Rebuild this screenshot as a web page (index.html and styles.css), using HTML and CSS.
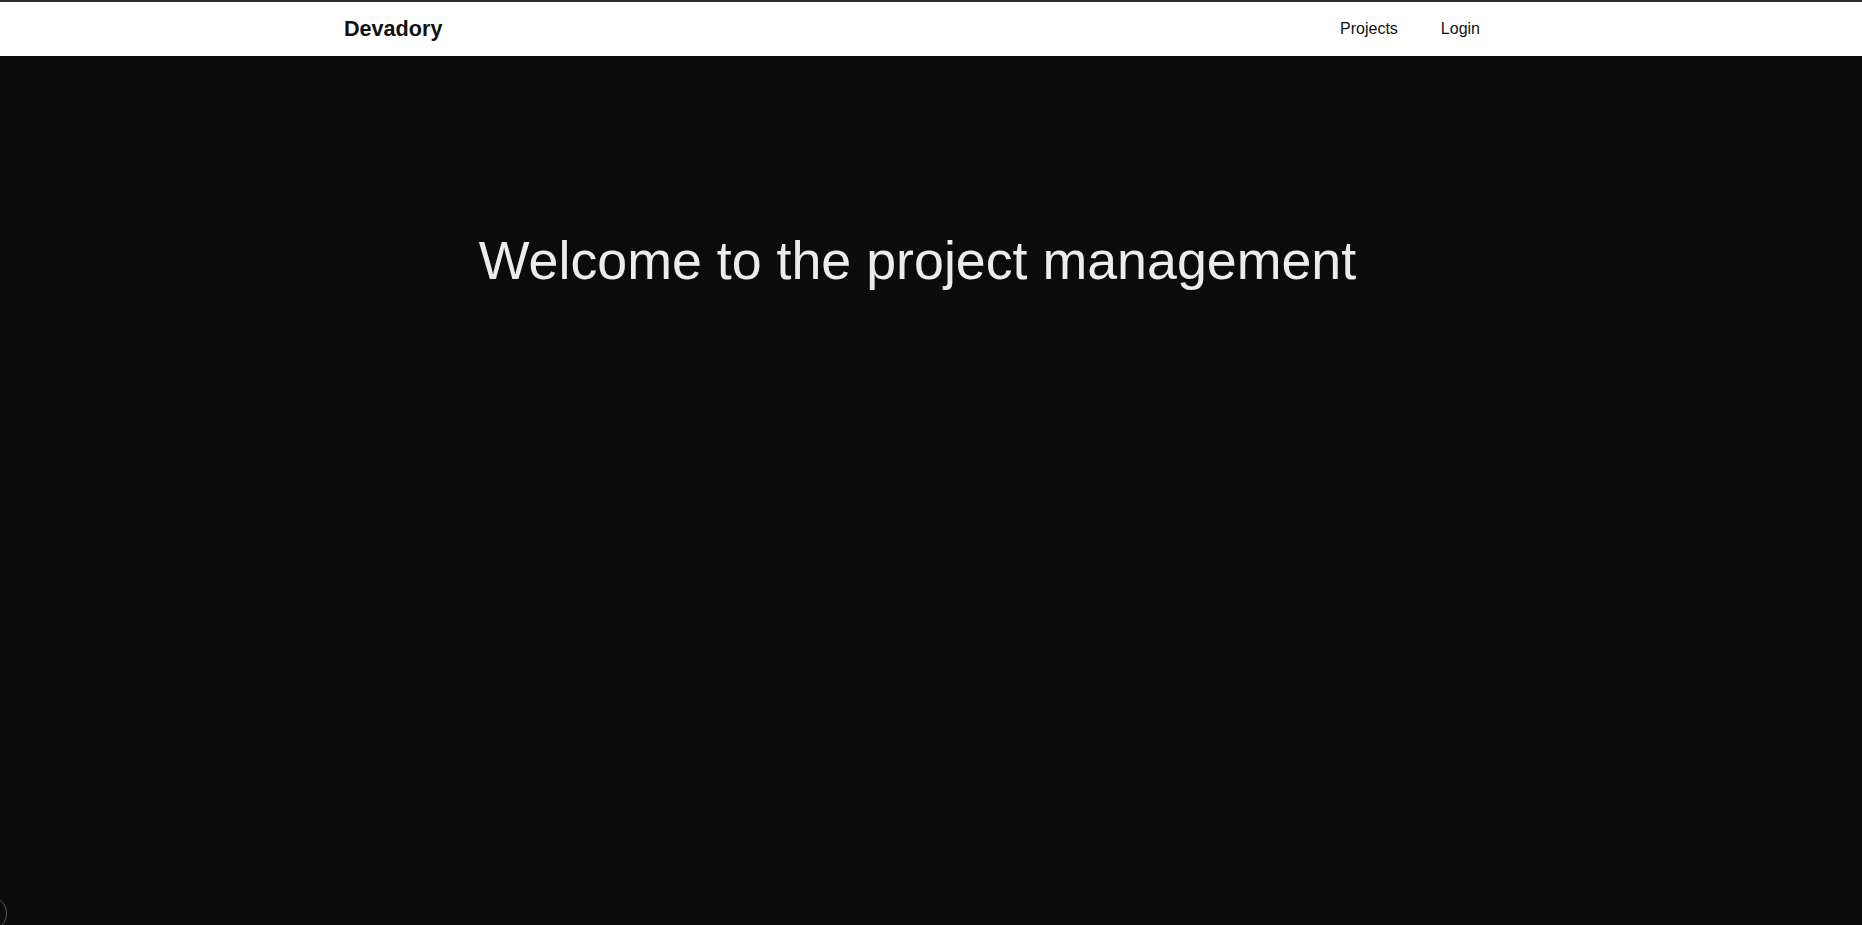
FILE: index.html
```html
<!DOCTYPE html>
<html lang="en">
<head>
<meta charset="utf-8">
<title>Devadory</title>
<link rel="stylesheet" href="styles.css">
</head>
<body>
<header class="topbar">
  <div class="topbar-inner">
    <a class="brand" href="#">Devadory</a>
    <nav class="nav">
      <a class="nav-link" href="#">Projects</a>
      <a class="nav-link" href="#">Login</a>
    </nav>
  </div>
</header>
<main class="hero">
  <h1 class="hero-title">Welcome to the project management</h1>
</main>
<button class="float-toggle" aria-label="toggle"></button>
</body>
</html>
```

FILE: styles.css
```css
* { box-sizing: border-box; }
html, body { height: 100%; }
body {
  margin: 0;
  background: #0b0b0b;
  font-family: "Liberation Sans", Arial, sans-serif;
  display: flex;
  flex-direction: column;
}
.topbar {
  background: #fff;
  border-top: 2px solid #2e2e2e;
  height: 56px;
  flex: 0 0 auto;
}
.topbar-inner {
  height: 100%;
  display: flex;
  align-items: center;
  justify-content: space-between;
  padding: 0 382px 0 344px;
}
.brand {
  font-size: 21.6px;
  font-weight: 700;
  color: #111;
  text-decoration: none;
}
.nav {
  display: flex;
  gap: 43px;
}
.nav-link {
  font-size: 16px;
  color: #111;
  text-decoration: none;
}
.hero {
  flex: 1 1 auto;
  display: flex;
  justify-content: center;
  padding-right: 27px;
}
.hero-title {
  margin: 173px 0 0;
  font-size: 53.75px;
  font-weight: 400;
  line-height: normal;
  color: #ececec;
}
.float-toggle {
  position: fixed;
  left: -28px;
  top: 896px;
  width: 35px;
  height: 35px;
  border-radius: 50%;
  border: 1px solid #5a5a5a;
  background: #0b0b0b;
  padding: 0;
}
```
